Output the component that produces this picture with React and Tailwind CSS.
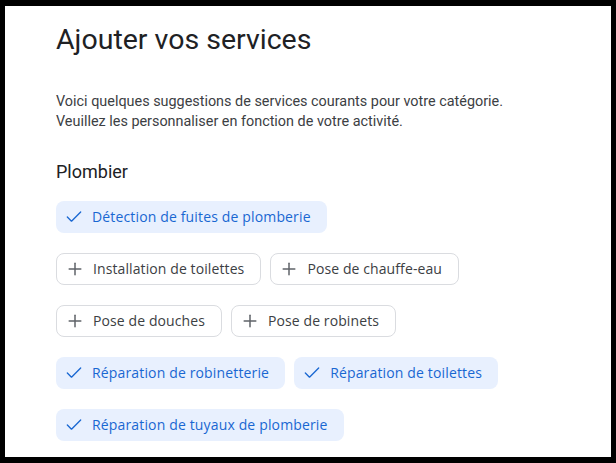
import { Check, Plus } from "lucide-react";

const rows = [
	[{ label: "Détection de fuites de plomberie", selected: true }],
	[
		{ label: "Installation de toilettes", selected: false },
		{ label: "Pose de chauffe-eau", selected: false },
	],
	[
		{ label: "Pose de douches", selected: false },
		{ label: "Pose de robinets", selected: false },
	],
	[
		{ label: "Réparation de robinetterie", selected: true },
		{ label: "Réparation de toilettes", selected: true },
	],
	[{ label: "Réparation de tuyaux de plomberie", selected: true }],
];

const chipFont = { fontFamily: "'Open Sans', Roboto, sans-serif" };

const Chip = ({ label, selected }) => {
	if (selected) {
		return (
			<div className="flex items-center gap-2 h-8 pl-2 pr-4 rounded-lg bg-[#e8f0fe] text-[#1967d2]">
				<Check className="w-5 h-5" strokeWidth={1.6} />
				<span className="text-sm font-medium tracking-[0.15px]" style={chipFont}>
					{label}
				</span>
			</div>
		);
	}
	return (
		<div className="flex items-center gap-2 h-8 pl-2 pr-4 rounded-lg border border-[#dadce0] text-[#3c4043]">
			<Plus className="w-5 h-5 text-[#5f6368]" strokeWidth={1.8} />
			<span className="text-sm font-medium tracking-[0.1px]" style={chipFont}>
				{label}
			</span>
		</div>
	);
};

const App = () => {
	return (
		<div
			className="w-[616px] h-[463px] bg-black p-[5px] pt-[6px] pb-[6px] overflow-hidden"
			style={{ fontFamily: "Roboto, 'Liberation Sans', sans-serif" }}
		>
			<div className="w-full h-full bg-white pl-[51px] pt-[16px]">
				<h1 className="text-[28.5px] leading-9 text-[#202124]">
					Ajouter vos services
				</h1>
				<p className="mt-[34px] text-[14.4px] leading-5 text-[#3c4043]">
					Voici quelques suggestions de services courants pour votre catégorie.
					<br />
					Veuillez les personnaliser en fonction de votre activité.
				</p>
				<h2 className="mt-[28px] text-lg leading-6 text-[#202124]">Plombier</h2>
				<div className="mt-[17px] flex flex-col gap-5">
					{rows.map((row, i) => (
						<div key={i} className="flex gap-[9px]">
							{row.map((chip) => (
								<Chip key={chip.label} {...chip} />
							))}
						</div>
					))}
				</div>
			</div>
		</div>
	);
};

export default App;
